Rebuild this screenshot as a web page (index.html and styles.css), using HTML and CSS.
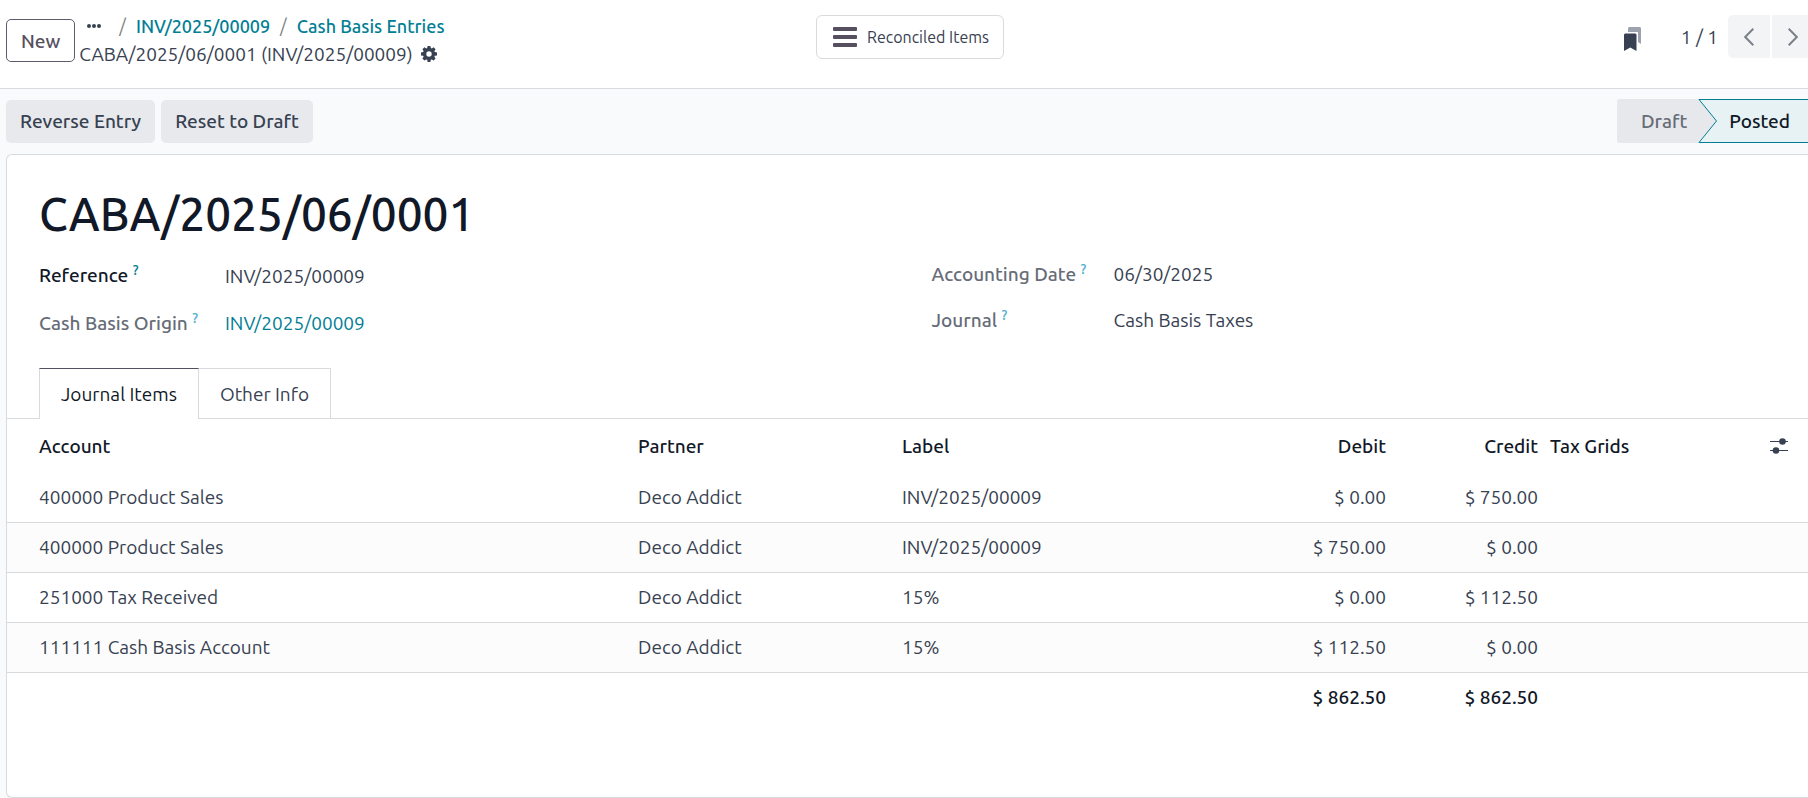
FILE: index.html
```html
<!DOCTYPE html>
<html lang="en">
<head>
    <meta charset="UTF-8">
    <meta name="viewport" content="width=device-width, initial-scale=1.0">
    <title>CABA/2025/06/0001</title>
    <link rel="stylesheet" href="styles.css">
</head>
<body>

    <header class="control-panel">
        <div class="panel-left">
            <button type="button" class="btn btn-outline">New</button>
            <div class="breadcrumb">
                <nav class="breadcrumb-path">
                    <button type="button" class="icon-btn" aria-label="More">
                        <svg width="14" height="4" viewBox="0 0 14 4" fill="#374151"><circle cx="2" cy="2" r="2"/><circle cx="7" cy="2" r="2"/><circle cx="12" cy="2" r="2"/></svg>
                    </button>
                    <span class="slash">/</span>
                    <a href="#">INV/2025/00009</a>
                    <span class="slash">/</span>
                    <a href="#">Cash Basis Entries</a>
                </nav>
                <div class="breadcrumb-current">
                    <span>CABA/2025/06/0001 (INV/2025/00009)</span>
                    <button type="button" class="icon-btn" aria-label="Actions">
                        <svg width="16" height="16" viewBox="0 0 16 16" fill="#374151" fill-rule="evenodd"><path d="M6.6 0h2.8l.4 2.1 1 .4L12.600 1.300l2 2-1.200 1.800.4 1 2.200.5v2.800l-2.200.4-.4 1 1.200 1.800-2 2-1.800-1.200-1 .4-.4 2.200H6.600l-.4-2.200-1-.4-1.800 1.200-2-2 1.200-1.800-.4-1L0 9.400V6.600l2.200-.5.4-1-1.200-1.800 2-2 1.800 1.200 1-.4zM8 5.300a2.700 2.700 0 1 0 0 5.400 2.700 2.700 0 0 0 0-5.400z"/></svg>
                    </button>
                </div>
            </div>
        </div>

        <button type="button" class="stat-button">
            <svg width="24" height="20" viewBox="0 0 24 20" fill="#564f60"><rect width="24" height="4" rx="1"/><rect y="8" width="24" height="4" rx="1"/><rect y="16" width="24" height="4" rx="1"/></svg>
            Reconciled Items
        </button>

        <div class="panel-right">
            <button type="button" class="icon-btn bookmark" aria-label="Bookmark">
                <svg width="17" height="24" viewBox="0 0 17 24"><path d="M5 0h11l1 1v16l-3-2V5H4V1z" fill="#9ca3af"/><path d="M0 7.500 1 6.500h10.500l1 1V24l-6.200-3.500L0 24z" fill="#374151"/></svg>
            </button>
            <span class="pager-count">1 / 1</span>
            <div class="pager">
                <button type="button" class="pager-prev" aria-label="Previous">
                    <svg width="10" height="18" viewBox="0 0 10 18" fill="none" stroke="#7b808a" stroke-width="2"><path d="M9.300.7 1.200 9l8.100 8.300"/></svg>
                </button>
                <button type="button" class="pager-next" aria-label="Next">
                    <svg width="10" height="18" viewBox="0 0 10 18" fill="none" stroke="#7b808a" stroke-width="2"><path d="M.7.7 8.800 9 .7 17.300"/></svg>
                </button>
            </div>
        </div>
    </header>

    <main>
        <div class="statusbar">
            <div class="statusbar-buttons">
                <button type="button" class="btn">Reverse Entry</button>
                <button type="button" class="btn">Reset to Draft</button>
            </div>
            <div class="status-steps">
                <button type="button" class="step">Draft</button>
                <svg class="step-arrow" width="20" height="44" viewBox="0 0 20 44"><path d="M0 0h20v44H0z" fill="#e7e8eb"/><path d="M.5.500H20v43H.5L18.500 22z" fill="#e6f2f3"/><path d="M20 .5H1L18.500 22 1 43.500h19" fill="none" stroke="#017e94"/></svg>
                <button type="button" class="step step-active">Posted</button>
            </div>
        </div>

        <section class="sheet">
            <h1>CABA/2025/06/0001</h1>

            <div class="fields">
                <div class="field-group">
                    <div class="field">
                        <label for="reference" class="editable">Reference <sup>?</sup></label>
                        <input type="text" id="reference" value="INV/2025/00009">
                    </div>
                    <div class="field">
                        <span class="field-label">Cash Basis Origin <sup>?</sup></span>
                        <a href="#">INV/2025/00009</a>
                    </div>
                </div>
                <div class="field-group field-group-right">
                    <div class="field">
                        <span class="field-label">Accounting Date <sup>?</sup></span>
                        <span>06/30/2025</span>
                    </div>
                    <div class="field">
                        <span class="field-label">Journal <sup>?</sup></span>
                        <span>Cash Basis Taxes</span>
                    </div>
                </div>
            </div>

            <div class="tabs">
                <button type="button" class="tab tab-active">Journal Items</button>
                <button type="button" class="tab">Other Info</button>
            </div>

            <table>
                <thead>
                    <tr>
                        <th class="col-account">Account</th>
                        <th class="col-partner">Partner</th>
                        <th class="col-label">Label</th>
                        <th class="col-amount">Debit</th>
                        <th class="col-amount">Credit</th>
                        <th class="col-tax">Tax Grids</th>
                        <th class="col-options">
                            <button type="button" class="icon-btn" aria-label="Columns">
                                <svg width="18" height="18" viewBox="0 0 18 18" fill="#374151"><path d="M0 4h18v1H0zM0 13h18v1H0z"/><circle cx="12.500" cy="4.500" r="3.300"/><circle cx="6" cy="13.500" r="3.300"/></svg>
                            </button>
                        </th>
                    </tr>
                </thead>
                <tbody>
                    <tr>
                        <td>400000 Product Sales</td>
                        <td>Deco Addict</td>
                        <td>INV/2025/00009</td>
                        <td class="amount">$ 0.00</td>
                        <td class="amount">$ 750.00</td>
                        <td></td>
                        <td></td>
                    </tr>
                    <tr>
                        <td>400000 Product Sales</td>
                        <td>Deco Addict</td>
                        <td>INV/2025/00009</td>
                        <td class="amount">$ 750.00</td>
                        <td class="amount">$ 0.00</td>
                        <td></td>
                        <td></td>
                    </tr>
                    <tr>
                        <td>251000 Tax Received</td>
                        <td>Deco Addict</td>
                        <td>15%</td>
                        <td class="amount">$ 0.00</td>
                        <td class="amount">$ 112.50</td>
                        <td></td>
                        <td></td>
                    </tr>
                    <tr>
                        <td>111111 Cash Basis Account</td>
                        <td>Deco Addict</td>
                        <td>15%</td>
                        <td class="amount">$ 112.50</td>
                        <td class="amount">$ 0.00</td>
                        <td></td>
                        <td></td>
                    </tr>
                </tbody>
                <tfoot>
                    <tr>
                        <td colspan="3"></td>
                        <td class="amount">$ 862.50</td>
                        <td class="amount">$ 862.50</td>
                        <td colspan="2"></td>
                    </tr>
                </tfoot>
            </table>
        </section>
    </main>

</body>
</html>
```

FILE: styles.css
```css
* {
    box-sizing: border-box;
}

body {
    margin: 0;
    min-height: 100vh;
    display: flex;
    flex-direction: column;
    background-color: #f9fafb;
    color: #374151;
    font-family: Ubuntu, "Noto Sans", sans-serif;
    font-size: 19px;
    line-height: 28px;
}

a {
    color: #017e94;
    text-decoration: none;
}

button,
input {
    font: inherit;
    color: inherit;
}

button {
    border: none;
    background: none;
    padding: 0;
    cursor: pointer;
    white-space: nowrap;
}

svg {
    display: block;
}

/* Control panel */
.control-panel {
    display: grid;
    grid-template-columns: 1fr auto 1fr;
    height: 89px;
    background-color: #fff;
    border-bottom: 1px solid #d8dadd;
}

.panel-left {
    display: flex;
    gap: 4px;
    padding: 12px 0 0 6px;
}

.btn {
    height: 43px;
    padding: 0 14px;
    border-radius: 5px;
    background-color: #e7e9ed;
    font-weight: 500;
}

.btn-outline {
    margin-top: 7px;
    border: 1px solid #5f5a6b;
    background-color: #fff;
    color: #564f60;
}

.breadcrumb-path,
.breadcrumb-current {
    display: flex;
    align-items: center;
    white-space: nowrap;
}

.breadcrumb-path {
    gap: 10px;
    padding-left: 8px;
    font-size: 18px;
    font-weight: 500;
}

.breadcrumb-path .icon-btn {
    margin-right: 8px;
}

.breadcrumb-current {
    gap: 8px;
}

.slash {
    color: #7c7f87;
    font-weight: 400;
}

.stat-button {
    display: flex;
    align-items: center;
    gap: 10px;
    height: 44px;
    margin-top: 15px;
    margin-left: 12px;
    padding: 0 14px 0 16px;
    border: 1px solid #d8dadd;
    border-radius: 6px;
    font-size: 16px;
}

.panel-right {
    display: flex;
    justify-content: flex-end;
    align-items: center;
    height: 43px;
    margin-top: 15px;
}

.bookmark {
    margin-top: 4px;
    margin-right: 40px;
}

.pager-count {
    margin-right: 10px;
}

.pager {
    display: flex;
    gap: 2px;
}

.pager button {
    display: flex;
    align-items: center;
    height: 43px;
    padding: 0 16px;
    background-color: #f3f4f6;
}

.pager .pager-prev {
    border-radius: 5px 0 0 5px;
}

.pager .pager-next {
    padding-right: 10px;
}

/* Status bar */
main {
    flex: 1;
    display: flex;
    flex-direction: column;
    padding-left: 6px;
}

.statusbar {
    display: flex;
    justify-content: space-between;
    align-items: center;
    padding: 10px 0 11px;
}

.statusbar-buttons,
.status-steps {
    display: flex;
}

.statusbar-buttons {
    gap: 6px;
}

.step {
    height: 44px;
    padding: 0 11px 0 24px;
    border-radius: 2px 0 0 2px;
    background-color: #e7e8eb;
    color: #666c78;
    font-weight: 500;
}

.step-active {
    padding: 0 18px 0 11px;
    border-top: 1px solid #017e94;
    border-bottom: 1px solid #017e94;
    border-radius: 0;
    background-color: #e6f2f3;
    color: #111827;
}

/* Sheet */
.sheet {
    flex: 1;
    border: 1px solid #d8dadd;
    border-right: none;
    border-radius: 6px 0 0 6px;
    background-color: #fff;
}

h1 {
    margin: 0;
    padding: 31px 32px 0;
    color: #111827;
    font-size: 46px;
    font-weight: 500;
    line-height: 56px;
}

.fields {
    display: grid;
    grid-template-columns: 1fr 1fr;
    gap: 16px;
    padding: 18px 0 0 32px;
}

.field-group {
    display: flex;
    flex-direction: column;
    gap: 19px;
}

.field-group-right {
    gap: 18px;
}

.field {
    display: grid;
    grid-template-columns: 170px 1fr;
    gap: 16px;
    align-items: center;
}

.field-group-right .field {
    grid-template-columns: 166px 1fr;
}

.field input {
    width: 100%;
    height: 30px;
    padding: 2px 0 0;
    border: none;
    outline: none;
    background: none;
}

.field label,
.field-label {
    color: #666c78;
    font-weight: 500;
    white-space: nowrap;
}

.field .editable {
    color: #111827;
}

sup {
    color: #4fb0d0;
    font-size: 14px;
    line-height: 0;
}

.editable sup {
    color: #017e94;
}

/* Tabs */
.tabs {
    display: flex;
    margin-top: 31px;
    padding-left: 32px;
    border-bottom: 1px solid #d8dadd;
}

.tab {
    height: 50px;
    padding: 0 21px;
    border: 1px solid #d8dadd;
    border-width: 1px 1px 0 0;
}

.tab-active {
    height: 51px;
    margin-bottom: -1px;
    border-top-color: #564f60;
    border-left-width: 1px;
    background-color: #fff;
    color: #111827;
}

/* Journal items */
table {
    width: 100%;
    table-layout: fixed;
    border-collapse: collapse;
}

th,
td {
    height: 50px;
    padding: 0 6px;
    text-align: left;
    white-space: nowrap;
}

th {
    height: 53px;
    color: #111827;
    font-weight: 500;
}

th:first-child,
td:first-child {
    padding-left: 32px;
}

tbody tr {
    border-bottom: 1px solid #d8dadd;
}

tbody tr:nth-child(even) {
    background-color: #fcfcfc;
}

tfoot td {
    color: #111827;
    font-weight: 500;
}

.col-partner {
    width: 264px;
}

.col-label {
    width: 344px;
}

.col-amount {
    width: 152px;
    text-align: right;
}

.col-tax {
    width: 176px;
}

.col-options {
    width: 88px;
}

.col-options .icon-btn {
    display: block;
    margin-left: auto;
    margin-right: 14px;
}

.amount {
    text-align: right;
}
```
